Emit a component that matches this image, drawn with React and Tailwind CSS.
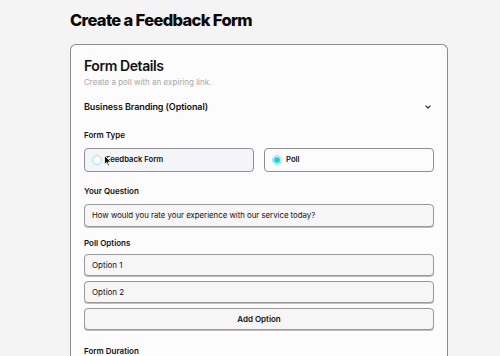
import React from "react";

function Radio({ checked }) {
  return checked ? (
    <span className="flex h-[10px] w-[10px] items-center justify-center rounded-full border border-[#8ce6ee] bg-[#e3f9fb]">
      <span className="h-[6px] w-[6px] rounded-full bg-[#1fd0e2]" />
    </span>
  ) : (
    <span className="h-[10px] w-[10px] rounded-full border-[1.5px] border-[#92e4e9] bg-white" />
  );
}

const field =
  "flex h-[22px] items-center rounded-[4px] border border-[#999] bg-[#f6f6f6] px-[7px] shadow-[0_1px_0_#bdbdbd]";

export default function App() {
  return (
    <div
      className="h-[356px] w-[500px] overflow-hidden bg-[#f4f4f4] pl-[70px] pt-[6px] text-[#111]"
      style={{ fontFamily: "Inter, 'Noto Sans', sans-serif" }}
    >
      <h1 className="text-[16.5px] font-extrabold leading-[28px] tracking-[-0.04em] text-[#0a0a0a]">
        Create a Feedback Form
      </h1>
      <div className="mt-[10px] w-[378px] rounded-t-[6px] border border-b-0 border-[#8c8c8c] bg-[#fcfcfc] px-[13px] pt-[11px] pb-[20px]">
        <div className="text-[14px] font-semibold leading-[20px] tracking-[-0.03em]">Form Details</div>
        <div className="text-[8px] leading-[12px] text-[#a8a8a8]">Create a poll with an expiring link.</div>

        <div className="mt-[11px] flex h-[16px] items-center justify-between pr-[2px]">
          <span className="text-[9px] font-semibold leading-[16px] tracking-[-0.01em]">Business Branding (Optional)</span>
          <svg width="8" height="6" viewBox="0 0 8 6" fill="none">
            <path d="M1.8 1.8 L4 4 L6.2 1.8" stroke="#333" strokeWidth="1.2" strokeLinecap="round" strokeLinejoin="round" />
          </svg>
        </div>

        <div className="mt-[13px] text-[8px] font-semibold leading-[14px]">Form Type</div>
        <div className="mt-[6px] grid grid-cols-2 gap-[10px]">
          <div className="relative flex h-[24px] items-center gap-[4px] rounded-[4px] border border-[#8f8f8f] bg-[#f3f5f8] px-[7px]">
            <Radio />
            <span className="text-[7.7px] font-semibold">Feedback Form</span>
            <svg className="absolute left-[19px] top-[6px]" width="8" height="12" viewBox="0 0 8 12">
              <path d="M0.5 0.5 L0.5 9.5 L2.6 7.6 L4 11 L5.4 10.4 L4 7.2 L7 7 Z" fill="#111" stroke="#fff" strokeWidth="0.8" />
            </svg>
          </div>
          <div className="flex h-[24px] items-center gap-[4px] rounded-[4px] border border-[#8f8f8f] bg-[#fcfcfc] px-[7px]">
            <Radio checked />
            <span className="text-[7.7px] font-semibold">Poll</span>
          </div>
        </div>

        <div className="mt-[12px] text-[8px] font-semibold leading-[14px]">Your Question</div>
        <div className={`mt-[6px] !h-[23px] text-[7.8px] ${field}`}>
          How would you rate your experience with our service today?
        </div>

        <div className="mt-[9px] text-[8px] font-semibold leading-[14px]">Poll Options</div>
        <div className="mt-[4px] flex flex-col gap-[5px]">
          <div className={`${field} text-[8px]`}>Option 1</div>
          <div className={`${field} text-[8px]`}>Option 2</div>
          <div className={`${field} justify-center text-[8px] font-semibold`}>Add Option</div>
        </div>

        <div className="mt-[14px] text-[8px] font-semibold leading-[14px]">Form Duration</div>
      </div>
    </div>
  );
}
